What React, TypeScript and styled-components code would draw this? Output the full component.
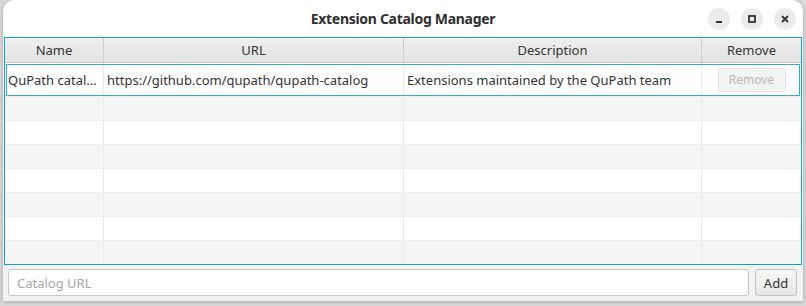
import React from "react";
import styled, { createGlobalStyle } from "styled-components";

const Global = createGlobalStyle`
  html, body { margin: 0; padding: 0; }
  body {
    width: 806px; height: 306px; overflow: hidden;
    background: #d9d9d9;
    font-family: "Noto Sans", "Open Sans", sans-serif;
  }
`;

const Window = styled.div`
  margin: 0 3px;
  height: 301px;
  background: #f3f3f3;
  border-radius: 12px 12px 0 0;
  box-shadow: 0 1px 4px rgba(0,0,0,0.25);
  display: flex;
  flex-direction: column;
  overflow: hidden;
`;

const TitleBar = styled.div`
  height: 37px;
  flex: none;
  background: #ffffff;
  display: grid;
  grid-template-columns: 1fr auto 1fr;
  align-items: center;
`;

const Title = styled.div`
  grid-column: 2;
  font-family: "Noto Sans", sans-serif;
  font-weight: 700;
  font-size: 14px;
  color: #2e2e2e;
  letter-spacing: -0.3px;
`;

const WinButtons = styled.div`
  grid-column: 3;
  justify-self: end;
  display: flex;
  gap: 11px;
  padding-right: 7px;
`;

const WinButton = styled.div`
  width: 22px;
  height: 22px;
  border-radius: 50%;
  background: #ebebeb;
  display: flex;
  align-items: center;
  justify-content: center;
`;

const Table = styled.div`
  margin: 0 1px;
  height: 226px;
  border: 1px solid #0f9ed8;
  background: #ffffff;
  display: flex;
  flex-direction: column;
  overflow: hidden;
`;

const cols = "99px 300px 298px 1fr";

const HeaderRow = styled.div`
  display: grid;
  grid-template-columns: ${cols};
  height: 24px;
  flex: none;
  background: linear-gradient(#f0f0f0, #e2e2e2);
  border-bottom: 1px solid #c8c8c8;
`;

const HeaderCell = styled.div`
  display: flex;
  align-items: center;
  justify-content: center;
  font-size: 13px;
  color: #333;
  border-right: 1px solid #cdcdcd;
  &:last-child { border-right: none; }
`;

const Row = styled.div<{ $alt?: boolean; $selected?: boolean; $h?: number }>`
  display: grid;
  grid-template-columns: ${cols};
  height: ${(p) => p.$h ?? 24}px;
  flex: none;
  box-sizing: border-box;
  background: ${(p) => (p.$alt ? "#f5f5f5" : "#ffffff")};
  ${(p) => (p.$selected ? "outline: 1px solid #3aa6d6; outline-offset: -2px;" : "")}
`;

const Cell = styled.div<{ $center?: boolean }>`
  display: flex;
  align-items: center;
  justify-content: ${(p) => (p.$center ? "center" : "flex-start")};
  padding: 0 3px;
  font-size: 13px;
  color: #333;
  white-space: nowrap;
  overflow: hidden;
  border-right: 1px solid #e8e8e8;
  border-bottom: 1px solid #eeeeee;
  &:last-child { border-right: none; }
`;

const RemoveButton = styled.button`
  font-family: "Noto Sans", sans-serif;
  font-size: 12px;
  color: #b8b8b8;
  background: #f3f3f3;
  border: 1px solid #e2e2e2;
  border-radius: 3px;
  height: 24px;
  width: 68px;
  padding: 0;
`;

const Bottom = styled.div`
  display: flex;
  align-items: center;
  gap: 6px;
  padding: 4px 6px 0 5px;
`;

const Input = styled.input`
  flex: 1;
  height: 27px;
  box-sizing: border-box;
  border: 1px solid #c6c6c6;
  border-radius: 3px;
  background: #fff;
  padding: 0 8px;
  font-family: "Noto Sans", sans-serif;
  font-size: 13px;
  color: #333;
  outline: none;
  &::placeholder { color: #a8a8a8; }
`;

const AddButton = styled.button`
  height: 27px;
  width: 42px;
  box-sizing: border-box;
  border: 1px solid #c2c2c2;
  border-radius: 3px;
  background: linear-gradient(#f8f8f8, #e6e6e6);
  font-family: "Noto Sans", sans-serif;
  font-size: 13px;
  color: #333;
  padding: 0;
`;

const emptyRows = [true, false, true, false, true, false, true];

export default function App() {
  return (
    <>
      <Global />
      <Window>
        <TitleBar>
          <Title>Extension Catalog Manager</Title>
          <WinButtons>
            <WinButton>
              <svg width="10" height="10" viewBox="0 0 10 10">
                <rect x="2" y="7" width="6" height="2" fill="#333" />
              </svg>
            </WinButton>
            <WinButton>
              <svg width="10" height="10" viewBox="0 0 10 10">
                <rect x="2" y="2" width="6" height="6" fill="none" stroke="#333" strokeWidth="1.8" />
              </svg>
            </WinButton>
            <WinButton>
              <svg width="10" height="10" viewBox="0 0 10 10">
                <path d="M2 2 L8 8 M8 2 L2 8" stroke="#333" strokeWidth="1.8" />
              </svg>
            </WinButton>
          </WinButtons>
        </TitleBar>
        <Table>
          <HeaderRow>
            <HeaderCell>Name</HeaderCell>
            <HeaderCell>URL</HeaderCell>
            <HeaderCell>Description</HeaderCell>
            <HeaderCell>Remove</HeaderCell>
          </HeaderRow>
          <Row $selected $h={34}>
            <Cell>QuPath catal...</Cell>
            <Cell>https://github.com/qupath/qupath-catalog</Cell>
            <Cell>Extensions maintained by the QuPath team</Cell>
            <Cell $center>
              <RemoveButton disabled>Remove</RemoveButton>
            </Cell>
          </Row>
          {emptyRows.map((alt, i) => (
            <Row key={i} $alt={alt}>
              <Cell />
              <Cell />
              <Cell />
              <Cell />
            </Row>
          ))}
        </Table>
        <Bottom>
          <Input placeholder="Catalog URL" />
          <AddButton>Add</AddButton>
        </Bottom>
      </Window>
    </>
  );
}
